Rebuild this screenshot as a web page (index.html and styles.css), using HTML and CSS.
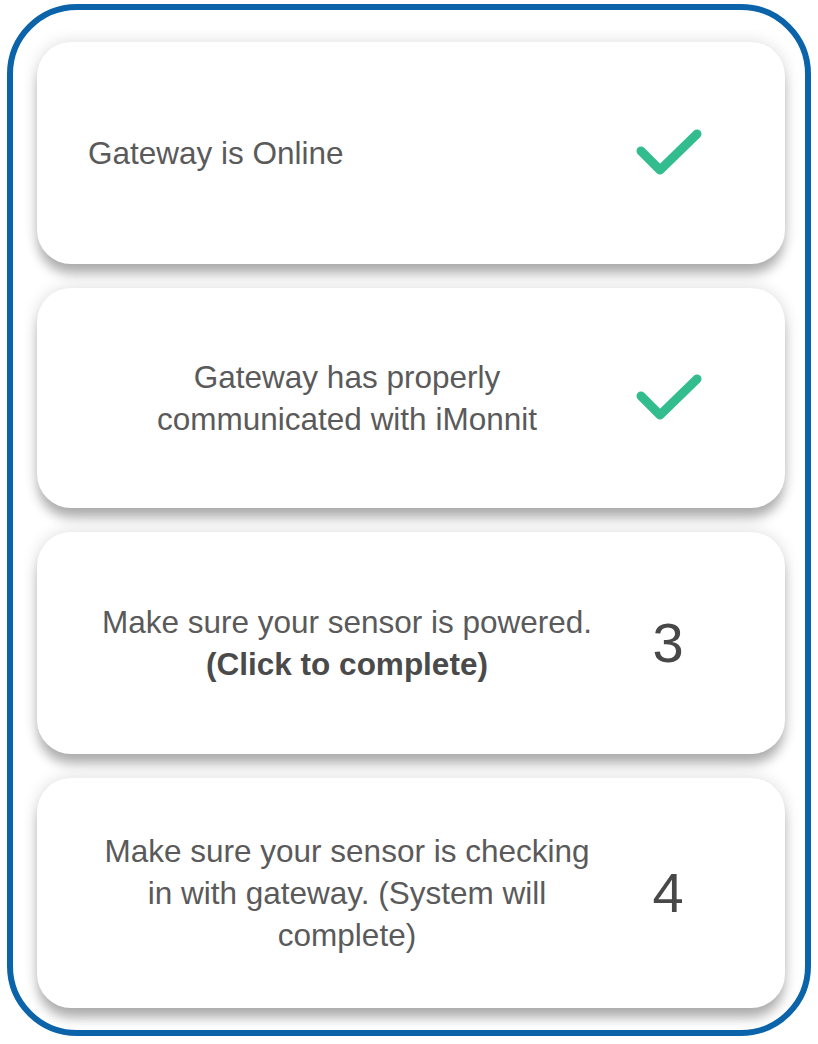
FILE: index.html
```html
<!DOCTYPE html>
<html lang="en">
<head>
<meta charset="utf-8">
<title>Gateway setup steps</title>
<link rel="stylesheet" href="styles.css">
</head>
<body>
<div class="frame">
  <div class="steps">
    <div class="step step--short">
      <div class="step-text step-text--left">Gateway is Online</div>
      <div class="step-mark">
        <svg class="check" viewBox="0 0 68 50" width="68" height="50"><polyline points="7,23 26,42 63,6" fill="none" stroke="#33bd8e" stroke-width="9" stroke-linecap="round" stroke-linejoin="round"/></svg>
      </div>
    </div>
    <div class="step step--mid">
      <div class="step-text">Gateway has properly<br>communicated with iMonnit</div>
      <div class="step-mark">
        <svg class="check" viewBox="0 0 68 50" width="68" height="50"><polyline points="7,23 26,42 63,6" fill="none" stroke="#33bd8e" stroke-width="9" stroke-linecap="round" stroke-linejoin="round"/></svg>
      </div>
    </div>
    <div class="step step--short">
      <div class="step-text">Make sure your sensor is powered.<br><strong>(Click to complete)</strong></div>
      <div class="step-mark step-num">3</div>
    </div>
    <div class="step step--tall">
      <div class="step-text">Make sure your sensor is checking<br>in with gateway. (System will<br>complete)</div>
      <div class="step-mark step-num">4</div>
    </div>
  </div>
</div>
</body>
</html>
```

FILE: styles.css
```css
html, body {
  margin: 0;
  padding: 0;
  background: #ffffff;
}

body {
  width: 818px;
  height: 1044px;
  font-family: "Liberation Sans", Arial, sans-serif;
}

.frame {
  box-sizing: border-box;
  margin: 4px 0 0 7px;
  width: 804px;
  height: 1032px;
  border: 6px solid #0b63aa;
  border-radius: 70px;
  background: #ffffff;
  padding: 32px 20px 20px 24px;
}

.steps {
  display: flex;
  flex-direction: column;
  gap: 24px;
}

.step {
  background: #ffffff;
  border-radius: 34px;
  display: flex;
  align-items: center;
  box-shadow: 0 12px 12px -2px rgba(0, 0, 0, 0.28), 0 0 16px rgba(0, 0, 0, 0.14);
}

.step--short { height: 222px; }
.step--mid { height: 220px; }
.step--tall { height: 230px; }

.step-text {
  width: 530px;
  margin-left: 45px;
  margin-right: 22px;
  text-align: center;
  font-size: 31.5px;
  line-height: 42px;
  color: #5a5a5a;
}

.step-text strong {
  color: #4a4a4a;
  font-weight: bold;
}

.step-text--left {
  text-align: left;
  margin-left: 51px;
  margin-right: 16px;
}

.step-mark {
  width: 68px;
  display: flex;
  align-items: center;
  justify-content: center;
}

.check {
  display: block;
}

.step-num {
  font-size: 56px;
  line-height: 60px;
  color: #484848;
}
```
